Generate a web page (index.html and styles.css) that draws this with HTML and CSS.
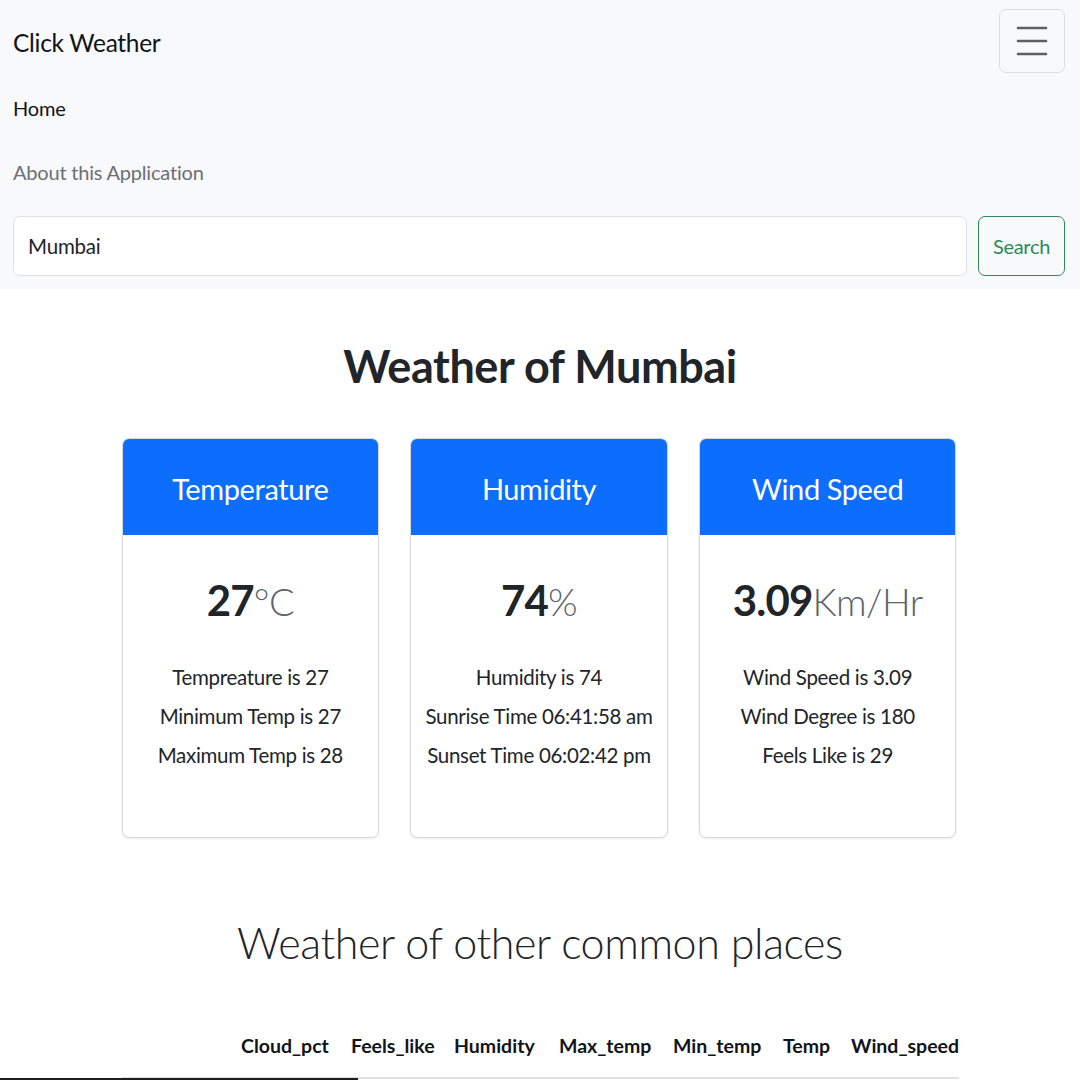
FILE: index.html
```html
<!DOCTYPE html>
<html lang="en">
<head>
<meta charset="utf-8">
<title>Click Weather</title>
<link rel="stylesheet" href="styles.css">
</head>
<body>
<nav class="navbar">
  <div class="nav-top">
    <a class="brand" href="#">Click Weather</a>
    <button class="toggler" type="button" aria-label="Toggle navigation">
      <svg width="32" height="30" viewBox="0 0 32 30" aria-hidden="true">
        <path d="M2 3.5H30M2 16.5H30M2 29.5H30" transform="translate(0,-1.5)" stroke="#5d6166" stroke-width="2.6" stroke-linecap="round" fill="none"/>
      </svg>
    </button>
  </div>
  <ul class="nav-links">
    <li><a class="nav-link active" href="#">Home</a></li>
    <li><a class="nav-link" href="#">About this Application</a></li>
  </ul>
  <form class="search">
    <input class="search-input" type="search" value="Mumbai" aria-label="Search">
    <button class="search-btn" type="button">Search</button>
  </form>
</nav>

<main class="container">
  <h1 class="title">Weather of Mumbai</h1>
  <div class="cards">
    <div class="card">
      <div class="card-header">Temperature</div>
      <div class="card-body">
        <div class="big"><span class="num">27</span><span class="unit">°C</span></div>
        <ul class="facts">
          <li>Tempreature is 27</li>
          <li>Minimum Temp is 27</li>
          <li>Maximum Temp is 28</li>
        </ul>
      </div>
    </div>
    <div class="card">
      <div class="card-header">Humidity</div>
      <div class="card-body">
        <div class="big"><span class="num">74</span><span class="unit">%</span></div>
        <ul class="facts">
          <li>Humidity is 74</li>
          <li>Sunrise Time 06:41:58 am</li>
          <li>Sunset Time 06:02:42 pm</li>
        </ul>
      </div>
    </div>
    <div class="card">
      <div class="card-header">Wind Speed</div>
      <div class="card-body">
        <div class="big"><span class="num">3.09</span><span class="unit">Km/Hr</span></div>
        <ul class="facts">
          <li>Wind Speed is 3.09</li>
          <li>Wind Degree is 180</li>
          <li>Feels Like is 29</li>
        </ul>
      </div>
    </div>
  </div>

  <h2 class="subtitle">Weather of other common places</h2>
  <div class="table-wrap">
    <table class="places">
      <colgroup>
        <col class="c-city"><col class="c-cloud"><col class="c-feels"><col class="c-hum">
        <col class="c-max"><col class="c-min"><col class="c-temp"><col class="c-wind">
      </colgroup>
      <thead>
        <tr>
          <th></th><th>Cloud_pct</th><th>Feels_like</th><th>Humidity</th>
          <th>Max_temp</th><th>Min_temp</th><th>Temp</th><th>Wind_speed</th>
        </tr>
      </thead>
    </table>
  </div>
</main>
<div class="scroll-thumb"></div>
</body>
</html>
```
FILE: styles.css
```css
* { box-sizing: border-box; }

html, body {
  margin: 0;
  padding: 0;
  background: #ffffff;
}

body {
  font-family: Lato, "Liberation Sans", sans-serif;
  color: #212529;
  overflow: hidden;
}

/* ---------- navbar ---------- */
.navbar {
  background: #f8f9fa;
  padding: 9px 15px 13px 13px;
}

.nav-top {
  display: flex;
  justify-content: space-between;
  align-items: center;
  height: 64px;
}

.brand {
  font-size: 24.5px;
  letter-spacing: -0.3px;
  color: #111418;
  text-decoration: none;
  padding-top: 2px;
}

.toggler {
  width: 66px;
  height: 64px;
  border: 1px solid #dcdde0;
  border-radius: 7px;
  background: transparent;
  display: flex;
  align-items: center;
  justify-content: center;
  padding: 0;
}

.nav-links {
  list-style: none;
  margin: 3px 0 0;
  padding: 0;
}

.nav-link {
  display: flex;
  align-items: center;
  height: 64px;
  font-size: 20px;
  letter-spacing: -0.2px;
  color: #6c6f73;
  text-decoration: none;
}

.nav-link.active { color: #111418; }

.search {
  display: flex;
  gap: 11px;
  margin-top: 12px;
}

.search-input {
  flex: 1;
  height: 60px;
  border: 1px solid #dee2e6;
  border-radius: 7px;
  background: #fff;
  padding: 0 14px;
  font-family: inherit;
  font-size: 20.5px;
  letter-spacing: -0.2px;
  color: #212529;
  outline: none;
}

.search-btn {
  width: 87px;
  height: 60px;
  border: 1px solid #2a8a5c;
  border-radius: 7px;
  background: transparent;
  color: #2a8a5c;
  font-family: inherit;
  font-size: 20px;
  letter-spacing: -0.3px;
  padding: 0;
}

/* ---------- main ---------- */
.container {
  width: 837px;
  margin: 0 auto;
}

.title {
  margin: 46px 0 41px;
  text-align: center;
  font-size: 45px;
  letter-spacing: -0.4px;
  line-height: 62px;
  font-weight: 700;
  color: #212529;
}

.cards {
  display: grid;
  grid-template-columns: repeat(3, 1fr);
  gap: 31px;
  padding-right: 2px;
}

.card {
  border: 1px solid #d6d8db;
  border-radius: 7px;
  overflow: hidden;
  background: #fff;
  box-shadow: 0 1px 2px rgba(0, 0, 0, 0.08);
  text-align: center;
}

.card-header {
  height: 96px;
  background: #0d6efd;
  color: #ffffff;
  font-size: 29px;
  letter-spacing: -0.4px;
  display: flex;
  align-items: center;
  justify-content: center;
  padding-top: 2px;
}

.card-body {
  padding: 35px 6px 62px;
}

.big {
  height: 60px;
  line-height: 60px;
  margin-bottom: 28px;
  white-space: nowrap;
}

.num {
  font-size: 42px;
  letter-spacing: -0.8px;
  font-weight: 700;
  color: #212529;
}

.unit {
  font-size: 38px;
  letter-spacing: -0.6px;
  font-weight: 300;
  color: #5c636a;
}

.facts {
  list-style: none;
  margin: 0;
  padding: 0;
  font-size: 20.5px;
  letter-spacing: -0.3px;
  line-height: 39px;
  color: #212529;
  white-space: nowrap;
}

.subtitle {
  margin: 75px 0 54px;
  text-align: center;
  font-size: 43px;
  letter-spacing: -0.4px;
  line-height: 60px;
  font-weight: 300;
  color: #212529;
}

/* ---------- table ---------- */
.table-wrap {
  width: 837px;
  overflow: hidden;
}

.places {
  table-layout: fixed;
  width: 848px;
  border-collapse: collapse;
}

.c-city  { width: 110px; }
.c-cloud { width: 110px; }
.c-feels { width: 103px; }
.c-hum   { width: 105px; }
.c-max   { width: 114px; }
.c-min   { width: 110px; }
.c-temp  { width: 68px; }
.c-wind  { width: 128px; }

.places th {
  text-align: left;
  padding: 2px 9.5px 14px;
  font-size: 19.5px;
  line-height: 34px;
  white-space: nowrap;
  font-weight: 700;
  color: #111418;
  border-bottom: 2px solid #dee2e6;
}

.scroll-thumb {
  position: fixed;
  left: 0;
  bottom: 0;
  width: 358px;
  height: 2px;
  background: #1e1e1e;
}
```
